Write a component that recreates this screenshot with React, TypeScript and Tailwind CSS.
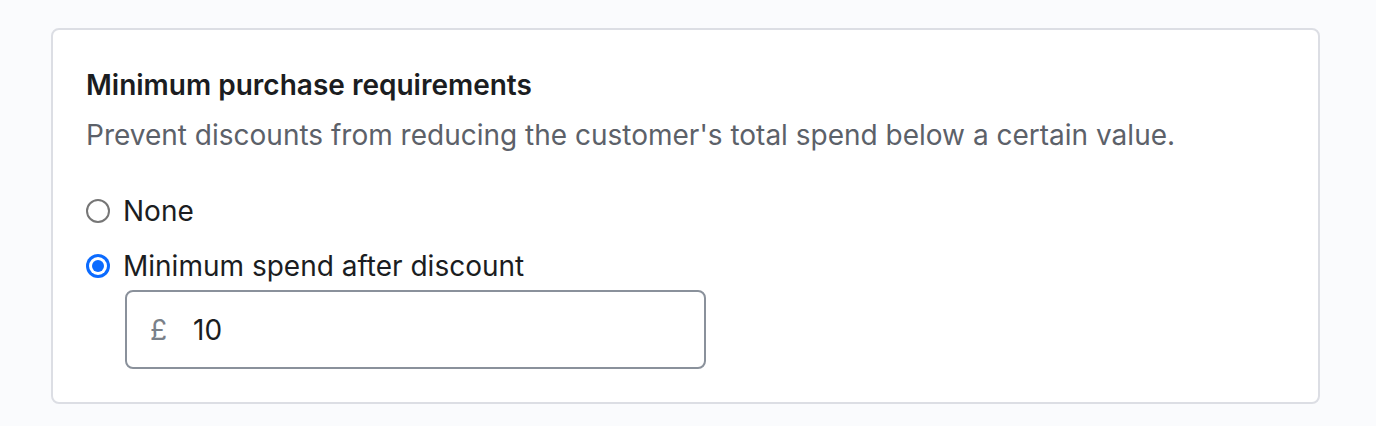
import React from 'react';

function Radio({ checked }: { checked: boolean }) {
  if (checked) {
    return (
      <span className="w-[24px] h-[24px] rounded-full bg-[#0b6bff] flex items-center justify-center shrink-0">
        <span className="w-[18px] h-[18px] rounded-full bg-white flex items-center justify-center">
          <span className="w-[12px] h-[12px] rounded-full bg-[#0b6bff]" />
        </span>
      </span>
    );
  }
  return <span className="w-[24px] h-[24px] rounded-full border-[2px] border-[#767676] bg-white shrink-0" />;
}

export default function App() {
  return (
    <div className="min-h-[426px] bg-[#fafbfd] pl-[51px] pr-[56px] pt-[28px] font-['Inter',sans-serif]">
      <div className="bg-white border-[2px] border-[#dcdee4] rounded-[8px] h-[376px] px-[33px] pt-[37px]">
        <h2 className="text-[28px] leading-[36px] font-semibold text-[#1b1d21]">
          Minimum purchase requirements
        </h2>
        <p className="mt-[14px] text-[28px] leading-[36px] text-[#5c6169]">
          Prevent discounts from reducing the customer's total spend below a certain value.
        </p>
        <div className="mt-[40px] flex flex-col gap-[19px]">
          <label className="flex items-center gap-[13px] text-[28px] leading-[36px] text-[#1b1d21]">
            <Radio checked={false} />
            None
          </label>
          <div>
            <label className="flex items-center gap-[13px] text-[28px] leading-[36px] text-[#1b1d21]">
              <Radio checked />
              Minimum spend after discount
            </label>
            <div className="ml-[39px] mt-[6px] w-[581px] h-[79px] border-[2px] border-[#8a919b] rounded-[8px] flex items-center pl-[23px] pr-[23px] gap-[26px] text-[28px]">
              <span className="text-[#7a8089]">£</span>
              <span className="text-[#1b1d21]">10</span>
            </div>
          </div>
        </div>
      </div>
    </div>
  );
}
